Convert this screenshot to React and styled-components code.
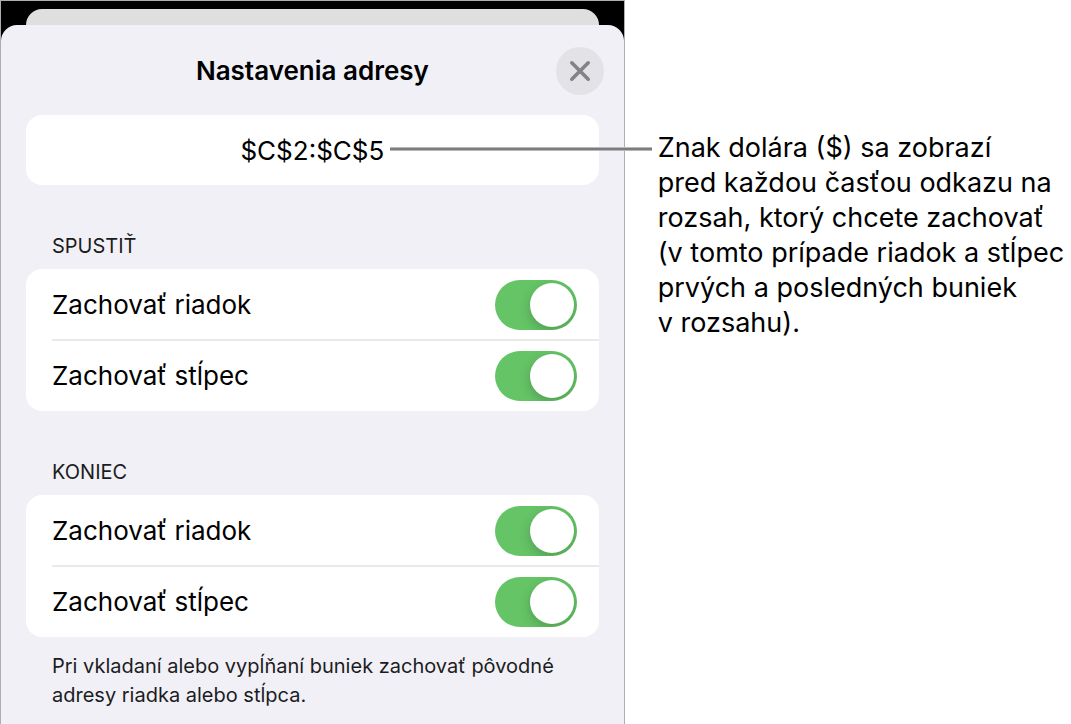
import React, { useState } from 'react'
import styled, { createGlobalStyle } from 'styled-components'

const groups = [
  {
    id: 'start',
    title: 'SPUSTIŤ',
    rows: ['Zachovať riadok', 'Zachovať stĺpec'],
  },
  {
    id: 'end',
    title: 'KONIEC',
    rows: ['Zachovať riadok', 'Zachovať stĺpec'],
  },
]

function SwitchRow({ id, label }) {
  const [on, setOn] = useState(true)
  return (
    <Row>
      <RowLabel htmlFor={id}>{label}</RowLabel>
      <Switch
        id={id}
        type="checkbox"
        role="switch"
        checked={on}
        onChange={(e) => setOn(e.target.checked)}
      />
    </Row>
  )
}

export default function App() {
  return (
    <Page>
      <GlobalStyle />
      <Device>
        <BackSheet />
        <Sheet>
          <Header>
            <Title>Nastavenia adresy</Title>
            <CloseButton type="button" aria-label="Zavrieť">
              <svg width="22" height="22" viewBox="0 0 22 22" fill="none">
                <path d="M2.8 2.8l16.4 16.4M19.2 2.8l-16.4 16.4" stroke="#838287" strokeWidth="3.6" strokeLinecap="round" />
              </svg>
            </CloseButton>
          </Header>
          <Address>
            $C$2:$C$5
            <Leader />
          </Address>
          {groups.map((group) => (
            <Group key={group.id}>
              <GroupTitle>{group.title}</GroupTitle>
              <Card>
                {group.rows.map((label, i) => (
                  <SwitchRow key={i} id={`${group.id}-${i}`} label={label} />
                ))}
              </Card>
            </Group>
          ))}
          <Note>
            Pri vkladaní alebo vypĺňaní buniek zachovať pôvodné adresy riadka alebo stĺpca.
          </Note>
        </Sheet>
      </Device>
      <Callout>
        Znak dolára ($) sa zobrazí<br />
        pred každou časťou odkazu na<br />
        rozsah, ktorý chcete zachovať<br />
        (v tomto prípade riadok a stĺpec<br />
        prvých a posledných buniek<br />
        v rozsahu).
      </Callout>
    </Page>
  )
}

const GlobalStyle = createGlobalStyle`
  * {
    box-sizing: border-box;
  }
  body {
    margin: 0;
    background: #ffffff;
    color: #000000;
    font-family: Inter, "Liberation Sans", sans-serif;
  }
`
const Page = styled.div`
  display: grid;
  grid-template-columns: minmax(0, 7fr) minmax(0, 5fr);
  min-height: 100vh;
`
const Device = styled.main`
  display: flex;
  flex-direction: column;
  background: #000000;
  border: 1px solid #aeaeb2;
  border-bottom: 0;
`
const BackSheet = styled.div`
  height: 16px;
  margin: 8px 25px 0;
  border-radius: 16px 16px 0 0;
  background: #dfdfdf;
`
const Sheet = styled.section`
  flex: 1;
  padding: 22px 25px 16px;
  border-radius: 16px 16px 0 0;
  background: #f1f0f6;
`
const Header = styled.header`
  display: grid;
  grid-template-columns: 48px 1fr 48px;
  align-items: center;
  margin: 0 -5px 20px;
`
const Title = styled.h1`
  grid-column: 2;
  margin: 0;
  font-size: 26px;
  font-weight: 600;
  line-height: 48px;
  text-align: center;
`
const CloseButton = styled.button`
  display: flex;
  align-items: center;
  justify-content: center;
  width: 48px;
  height: 48px;
  padding: 0;
  border: 0;
  border-radius: 50%;
  background: #e3e2e7;
  cursor: pointer;
`
const Address = styled.div`
  position: relative;
  height: 70px;
  border-radius: 16px;
  background: #ffffff;
  font-size: 26px;
  line-height: 72px;
  text-align: center;
`
/* runs from the address text out to the callout */
const Leader = styled.span`
  position: absolute;
  top: 32px;
  left: calc(50% + 78px);
  right: -53px;
  height: 4px;
  border: solid #b8b8b8;
  border-width: 1px 0;
  background: #7c7c7c;
`
const Group = styled.section`
  margin-top: 46px;
`
const GroupTitle = styled.h2`
  margin: 0 26px 8px;
  color: #1c1c1e;
  font-size: 20px;
  font-weight: 400;
  line-height: 30px;
`
const Card = styled.div`
  border-radius: 16px;
  background: #ffffff;
`
const Row = styled.div`
  display: flex;
  align-items: center;
  justify-content: space-between;
  height: 71px;
  margin-left: 26px;
  padding-right: 22px;

  & + & {
    height: 72px;
    margin-top: -1px;
    border-top: 2px solid #e9e9eb;
  }
`
const RowLabel = styled.label`
  font-size: 26px;
  line-height: 36px;
`
const Switch = styled.input`
  appearance: none;
  display: flex;
  width: 82px;
  height: 50px;
  margin: 0;
  padding: 3px;
  border-radius: 25px;
  background: ${(p) => (p.checked ? '#65c466' : '#e9e9eb')};
  overflow: hidden;
  cursor: pointer;

  &::before {
    content: '';
    width: 44px;
    height: 44px;
    margin-left: ${(p) => (p.checked ? 'auto' : '0')};
    border-radius: 50%;
    background: #ffffff;
    box-shadow: 0 4px 12px rgba(0, 0, 0, 0.2);
  }
`
const Note = styled.p`
  margin: 15px 26px 0;
  color: #1c1c1e;
  font-size: 20px;
  line-height: 29px;
`
const Callout = styled.p`
  margin: 0;
  padding: 130px 0 0 33px;
  font-size: 27px;
  line-height: 35px;
  white-space: nowrap;
`
